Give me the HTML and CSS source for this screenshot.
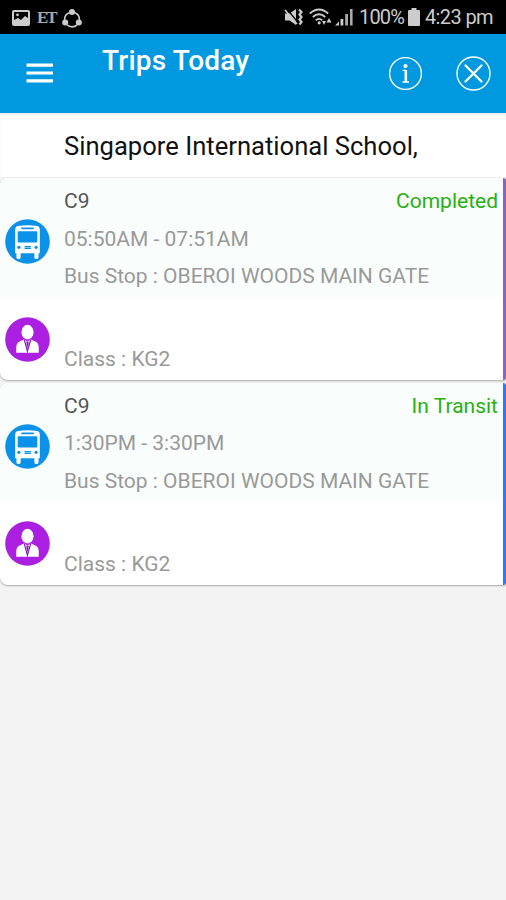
FILE: index.html
```
<!DOCTYPE html>
<html>
<head>
<meta charset="UTF-8">
<meta name="format-detection" content="telephone=no" />
<title>Trips Today</title>
<link rel="stylesheet" href="styles.css">
</head>
<body>

	<!-- shared icons -->
	<svg class="sprite" width="0" height="0">
		<symbol id="bus" viewBox="0 0 46 46">
			<circle cx="23" cy="23" r="22.8" fill="#0b91e8"/>
			<path fill="#fff" d="M13 7.2Q23 5.5 33 7.2Q35.6 7.8 35.6 10.5V35H34.3V39Q34.3 41 32.2 41Q30 41 30 39V35H16V39Q16 41 13.8 41Q11.7 41 11.7 39V35H10.4V10.5Q10.4 7.8 13 7.2Z"/>
			<rect x="16.5" y="8.8" width="13" height="1.6" rx=".8" fill="#0b91e8"/>
			<rect x="13" y="12.6" width="20" height="11.4" rx="1" fill="#0b91e8"/>
			<circle cx="14.2" cy="29" r="1.6" fill="#0b91e8"/>
			<circle cx="31.8" cy="29" r="1.6" fill="#0b91e8"/>
			<path d="M20 28.2H26.5M20 30H26.5" stroke="#0b91e8" stroke-width="1.3"/>
		</symbol>
		<symbol id="person" viewBox="0 0 46 46">
			<circle cx="23" cy="23" r="22.8" fill="#aa1fe0"/>
			<ellipse cx="23" cy="15.5" rx="6.2" ry="7.5" fill="#fff"/>
			<path fill="#fff" d="M11.5 36.5V31Q11.5 26 16 24.5L19.5 23L23 25L26.5 23L30 24.5Q34.5 26 34.5 31V36.5Z"/>
			<path d="M19.8 23.5L22.9 35L26.2 23.5" fill="none" stroke="#8a1bbd" stroke-width="1.2"/>
			<path d="M21.8 25H24.2L24 28L23 32L22 28Z" fill="#8a1bbd"/>
		</symbol>
	</svg>

	<div class="statusbar">
		<div class="notices">
			<svg width="18" height="16" viewBox="0 0 18 16"><rect x="1" y="1" width="16" height="14" rx="1" fill="none" stroke="#ccc" stroke-width="2"/><path d="M2 14V10L6 8L9 10L13 6L16 8V14Z" fill="#ccc"/><circle cx="5.5" cy="4.8" r="1.4" fill="#ccc"/></svg>
			<span class="et">ET</span>
			<svg width="20" height="20" viewBox="0 0 20 20"><circle cx="10" cy="11.5" r="7.4" fill="none" stroke="#ccc" stroke-width="1.6" stroke-dasharray="11 4.5" stroke-dashoffset="-6"/><circle cx="10" cy="4" r="3" fill="#ccc"/><circle cx="3.2" cy="14.6" r="3" fill="#ccc"/><circle cx="16.8" cy="14.6" r="3" fill="#ccc"/></svg>
		</div>
		<div class="system">
			<svg width="19" height="18" viewBox="0 0 19 18"><path d="M1 5.5H5.5L12 1V17L5.5 12.5H1Z" fill="#ccc"/><path d="M3 1L14 14.5" stroke="#000" stroke-width="1.2"/><path d="M1 2L13 16" stroke="#ccc" stroke-width="1.6"/><path d="M15 1.5L17.5 4L15.5 6.5L17.5 9L15.5 11.5L17.5 14L15.5 16.5" fill="none" stroke="#ccc" stroke-width="2.2"/></svg>
			<svg class="wifi" width="23" height="18" viewBox="0 0 23 18"><path d="M.8 5.5Q10 -2.5 19.2 5.5M3.8 9Q10 3.6 16.2 9M6.8 12.2Q10 9.5 13.2 12.2" fill="none" stroke="#ccc" stroke-width="1.8"/><circle cx="10.2" cy="14.8" r="1.6" fill="#ccc"/><path d="M13 13L15 17L17 13ZM17.5 14.5L20 10L22.5 14.5Z" fill="#ccc"/></svg>
			<svg class="signal" width="18" height="18" viewBox="0 0 18 18"><path d="M0 17.5L4 13.5V17.5ZM5.5 11H8.3V17.5H5.5Z" fill="#ccc"/><path d="M10.2 6H13V17.5H10.2ZM15 1H17.6V17.5H15Z" fill="#aaa"/></svg>
			<span class="battery">100%</span>
			<svg class="cell" width="12" height="18" viewBox="0 0 12 18"><path d="M3.5 0H8.5V2H11Q12 2 12 3V17Q12 18 11 18H1Q0 18 0 17V3Q0 2 1 2H3.5Z" fill="#ccc"/></svg>
			<span class="time">4:23 pm</span>
		</div>
	</div>

	<div class="header">
		<svg class="menu" width="27" height="20" viewBox="0 0 27 20"><path d="M.5 2.2H27M.5 10H27M.5 17.8H27" stroke="#fff" stroke-width="3.2"/></svg>
		<h1>Trips Today</h1>
		<div class="actions">
			<svg width="35" height="35" viewBox="0 0 35 35" fill="none" stroke="#fff"><circle cx="17.5" cy="17.5" r="15.9" stroke-width="1.4"/><circle cx="17.5" cy="10" r="2.1" fill="#fff" stroke="none"/><path d="M14.5 14.3H18M14.5 26H21" stroke-width="1.3"/><path d="M17.8 14V26" stroke-width="2.6"/></svg>
			<svg width="35" height="35" viewBox="0 0 35 35" fill="none" stroke="#fff"><circle cx="17.5" cy="17.5" r="16.5" stroke-width="1.4"/><path d="M9.5 9.5L25.5 25.5M25.5 9.5L9.5 25.5" stroke-width="2.3" stroke-linecap="round"/></svg>
		</div>
	</div>

	<p class="school">Singapore International School,</p>

	<div class="card completed">
		<div class="trip">
			<svg class="icon"><use href="#bus"/></svg>
			<div class="detail">
				<div class="route"><span>C9</span><span class="status">Completed</span></div>
				<p>05:50AM - 07:51AM</p>
				<p class="stop">Bus Stop : OBEROI WOODS MAIN GATE</p>
			</div>
		</div>
		<div class="student">
			<svg class="icon"><use href="#person"/></svg>
			<p>Class : KG2</p>
		</div>
	</div>

	<div class="card transit">
		<div class="trip">
			<svg class="icon"><use href="#bus"/></svg>
			<div class="detail">
				<div class="route"><span>C9</span><span class="status">In Transit</span></div>
				<p>1:30PM - 3:30PM</p>
				<p class="stop">Bus Stop : OBEROI WOODS MAIN GATE</p>
			</div>
		</div>
		<div class="student">
			<svg class="icon"><use href="#person"/></svg>
			<p>Class : KG2</p>
		</div>
	</div>

</body>
</html>
```

FILE: styles.css
```
body{
	margin:0;
	background:#f3f3f3;
	font-family:Roboto, "Liberation Sans", sans-serif;
}
p,h1{
	margin:0;
	font-weight:normal;
}
svg{
	display:block;
	flex-shrink:0;
}
.sprite{
	position:absolute;
}
.statusbar{
	display:flex;
	justify-content:space-between;
	height:34px;
	padding:0 13px 0 12px;
	box-sizing:border-box;
	background:#000;
	color:#ccc;
	font-size:20px;
	line-height:37px;
	white-space:nowrap;
}
.notices,.system{
	display:flex;
	align-items:center;
}
.notices{
	gap:6px;
	padding-top:1px;
}
.et{
	width:19px;
	margin-left:1px;
	color:#aaa;
	font-family:"Liberation Serif", serif;
	font-size:17px;
	font-weight:bold;
	line-height:34px;
	letter-spacing:-2px;
}
.wifi{
	margin-left:6px;
}
.signal{
	margin-left:3px;
}
.battery{
	margin-left:6px;
	letter-spacing:-.9px;
}
.cell{
	margin:0 5px 0 4px;
}
.time{
	letter-spacing:-.6px;
}
.header{
	display:flex;
	height:79px;
	padding:0 15px 0 26px;
	box-sizing:border-box;
	background:#0099df;
	color:#fff;
}
.menu{
	margin-top:29px;
}
.header h1{
	margin-left:49px;
	font-size:28px;
	font-weight:500;
	letter-spacing:.2px;
	line-height:53px;
}
.actions{
	display:flex;
	gap:33px;
	margin:22px 0 0 auto;
}
.school{
	height:64px;
	padding-left:64px;
	background:#fff;
	color:#111;
	font-size:25.6px;
	line-height:66px;
	box-shadow:inset 0 2px 2px #eee;
}
.card{
	height:202px;
	margin:1px 0 2.5px;
	box-sizing:border-box;
	border-right:3px solid #8a62d0;
	border-radius:8px 3px 3px 8px;
	background:#fff;
	box-shadow:0 1px 2px #aaa;
	color:#999;
	font-size:21px;
	line-height:37.5px;
	overflow:hidden;
}
.transit{
	border-right-color:#2580ee;
}
.trip{
	display:flex;
	height:119px;
	padding:5px 5px 0;
	box-sizing:border-box;
	background:#f9fefd;
}
.icon{
	width:45px;
	height:45px;
}
.trip .icon{
	margin-top:36px;
}
.detail{
	flex:1;
	margin-left:14px;
}
.route{
	display:flex;
	justify-content:space-between;
	color:#555;
}
.status{
	color:#28b010;
}
.student{
	display:flex;
	padding:19.5px 5px 0;
}
.student p{
	margin:24.5px 0 0 14px;
}
```
